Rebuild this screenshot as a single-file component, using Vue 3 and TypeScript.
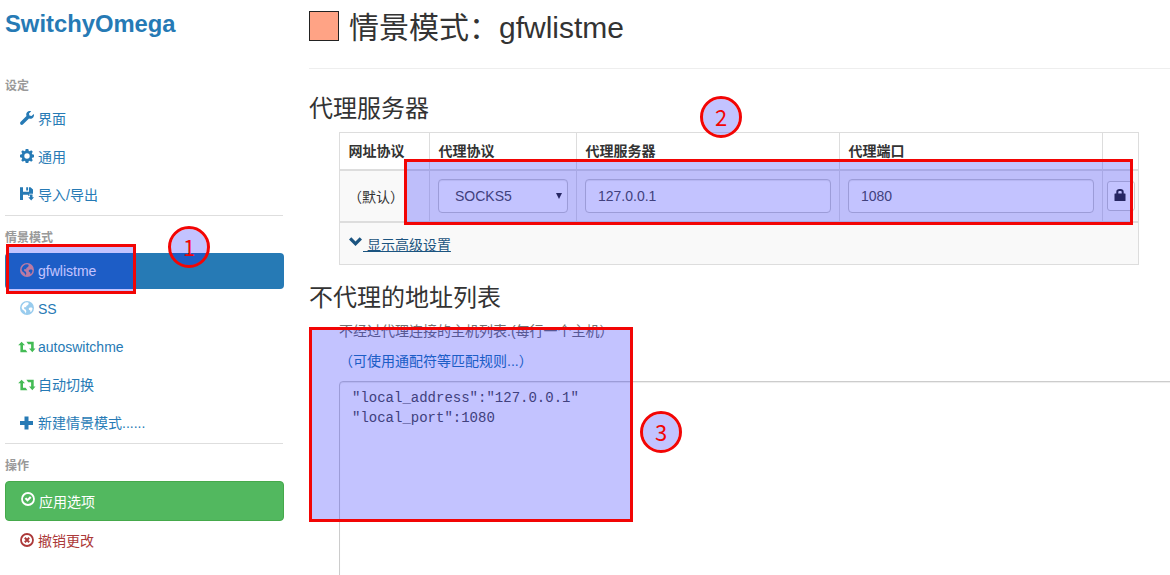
<script setup lang="ts">
import { ref } from 'vue'

type IconName = 'wrench' | 'gear' | 'save' | 'globe' | 'retweet' | 'plus'

interface NavItem {
  label: string
  icon: IconName
  tone?: string
  active?: boolean
}

const settings: NavItem[] = [
  { label: '界面', icon: 'wrench' },
  { label: '通用', icon: 'gear' },
  { label: '导入/导出', icon: 'save' },
]

const profiles: NavItem[] = [
  { label: 'gfwlistme', icon: 'globe', tone: 'salmon', active: true },
  { label: 'SS', icon: 'globe', tone: 'sky' },
  { label: 'autoswitchme', icon: 'retweet', tone: 'green' },
  { label: '自动切换', icon: 'retweet', tone: 'green' },
  { label: '新建情景模式......', icon: 'plus' },
]

const groups = [
  { title: '设定', items: settings },
  { title: '情景模式', items: profiles },
]

const paths: Record<IconName, string> = {
  wrench:
    'M13.8 3.1 11.5 5.1 9.4 4.5 9 2.6 11.2.3C9.5-.2 7.6.2 6.7 1.7 6.1 2.8 6.1 3.9 6.5 5L.7 10.8C0 11.5-.1 12.7.6 13.4 1.3 14.1 2.4 14 3.1 13.3L9 7.5C10.6 8 12.2 7.7 13.2 6.5 14 5.5 14.2 4.2 13.8 3.1Z',
  gear:
    'M5.7 0h2.6l.4 1.8 1 .4L11.2 1.200 12.800 2.800 11.800 4.300l.4 1L14 5.700v2.600l-1.800.4-.4 1L12.800 11.200 11.200 12.800 9.700 11.800l-1 .4L8.300 14H5.700l-.4-1.800-1-.4L2.800 12.800 1.200 11.200 2.200 9.700l-.4-1L0 8.300V5.700l1.800-.4.4-1L1.200 2.800 2.800 1.200 4.300 2.200l1-.4ZM7 4.300a2.700 2.700 0 1 0 0 5.400 2.700 2.700 0 0 0 0-5.400Z',
  save:
    'M0 .3h3v4.400h6V.3h1.500L13 2.500v4.200H9.500v2.200H8.300V7.700H3V13H0ZM6.200.3h1.900v3.200H6.200ZM10 7.500h2.500v2.800H14L11.200 13.500 8.300 10.300H10Z',
  globe:
    'M7 0a7 7 0 1 1 0 14A7 7 0 0 1 7 0ZM7.300 1.300 5.200 1.600 3.200 2.900 1.900 4.900 1.600 7 2.600 8.700 4.200 9.800 5.300 11.500 5.800 12.500 6.300 10.500 5.900 8.800 4.300 7.900 4 6.600 5.200 5.900 6.200 6.400 6.300 5.100 7.600 4.200 8.700 3.100 8.500 1.700ZM9.800 6.600 8.700 7.500 9 9 10.200 9.300 10.400 10.900 11.200 10.700 12.200 9.100 12.500 7.300 11.700 6.500Z',
  retweet:
    'M3.600 1.700 7 5.300H5V9.700H7.600L9.400 12.300H2.400V5.300H.2ZM8.400 1.700H15.700V8.400H17.500L14.300 12.300 11 8.400H13.100V4.300H10.200Z',
  plus: 'M4.500 1.500h4V6H13v4H8.500v4.500h-4V10H0V6h4.500Z',
}

const host = ref('127.0.0.1')
const port = ref('1080')
const bypassList = ref('"local_address":"127.0.0.1"\n"local_port":1080')
</script>

<template>
  <div class="page">
    <aside class="sidebar">
      <h1 class="brand">SwitchyOmega</h1>
      <nav>
        <section v-for="group in groups" :key="group.title" class="group">
          <div class="group-title">{{ group.title }}</div>
          <a v-for="item in group.items" :key="item.label" class="item" :class="{ active: item.active }">
            <svg
              class="icon"
              :class="[item.tone, { wide: item.icon === 'retweet' }]"
              :viewBox="item.icon === 'retweet' ? '0 0 18 14' : '0 0 14 14'"
            >
              <path :d="paths[item.icon]" fill="currentColor" fill-rule="evenodd" />
            </svg>
            <span>{{ item.label }}</span>
          </a>
        </section>
        <section class="group">
          <div class="group-title">操作</div>
          <a class="item apply">
            <svg class="icon" viewBox="0 0 14 14">
              <circle cx="7" cy="7" r="6" fill="none" stroke="currentColor" stroke-width="1.8" />
              <path d="M3.7 6.8 5.2 5.5 6.5 6.7 9 4.3 10.5 5.7 6.5 9.7Z" fill="currentColor" />
            </svg>
            <span>应用选项</span>
          </a>
          <a class="item revert">
            <svg class="icon" viewBox="0 0 14 14">
              <circle cx="7" cy="7" r="6" fill="none" stroke="currentColor" stroke-width="1.8" />
              <path d="M4.8 4.8 9.2 9.2M9.2 4.8 4.8 9.2" stroke="currentColor" stroke-width="2" />
            </svg>
            <span>撤销更改</span>
          </a>
        </section>
      </nav>
    </aside>

    <main class="content">
      <header class="title">
        <span class="swatch"></span>
        <h2>情景模式：gfwlistme</h2>
      </header>

      <h3 class="servers-title">代理服务器</h3>
      <div class="table">
        <div class="row head">
          <div class="cell">网址协议</div>
          <div class="cell">代理协议</div>
          <div class="cell">代理服务器</div>
          <div class="cell">代理端口</div>
          <div class="cell"></div>
        </div>
        <div class="row body">
          <div class="cell scheme">（默认）</div>
          <div class="cell">
            <div class="control select">
              <span>SOCKS5</span>
              <svg class="caret" viewBox="0 0 6 6"><path d="M0 0h6L3 6Z" fill="currentColor" /></svg>
            </div>
          </div>
          <div class="cell"><input v-model="host" class="control" /></div>
          <div class="cell"><input v-model="port" class="control" /></div>
          <div class="cell lock-cell">
            <button class="lock">
              <svg viewBox="0 0 12 12">
                <path
                  d="M2.3 4.5V2.7C2.3.9 3.7 0 5.2 0h1.6c1.5 0 2.9.9 2.9 2.7v1.8H11q.5 0 .5.5v6.5q0 .5-.5.5H1q-.5 0-.5-.5V5q0-.5.5-.5ZM4.3 4.5h3.4V3q0-1-1-1H5.300q-1 0-1 1Z"
                  fill="currentColor"
                  fill-rule="evenodd"
                />
              </svg>
            </button>
          </div>
        </div>
        <div class="foot">
          <svg class="chevron" viewBox="0 0 13 9">
            <path d="M0 2.6 2.3.3 6.5 4.4 10.7.3 13 2.6 6.5 9Z" fill="currentColor" />
          </svg>
          <a class="advanced">&nbsp;显示高级设置</a>
        </div>
      </div>

      <h3 class="bypass-title">不代理的地址列表</h3>
      <div class="bypass">
        <p class="help">不经过代理连接的主机列表:(每行一个主机）</p>
        <p class="help link">（可使用通配符等匹配规则...）</p>
        <textarea v-model="bypassList" class="list" spellcheck="false"></textarea>
      </div>
    </main>

    <div class="mark box-profile"></div>
    <div class="mark box-server"></div>
    <div class="mark box-bypass"></div>
    <div class="mark step step-1">1</div>
    <div class="mark step step-2">2</div>
    <div class="mark step step-3">3</div>
  </div>
</template>

<style>
body {
  overflow: hidden;
  background: #fff;
}
</style>

<style scoped>
* {
  box-sizing: border-box;
}
.page {
  position: relative;
  display: flex;
  gap: 25px;
  width: 1170px;
  height: 575px;
  padding-left: 5px;
  overflow: hidden;
  color: #333;
  font: 14px/20px 'Liberation Sans', 'Noto Sans CJK SC', sans-serif;
  white-space: nowrap;
}
h1,
h2,
h3,
p {
  margin: 0;
  font-weight: 400;
}
.sidebar {
  flex: none;
  width: 279px;
}
.brand {
  height: 69px;
  padding-top: 9px;
  color: #267ab5;
  font-size: 23.8px;
  font-weight: 700;
  line-height: 30px;
}
.group + .group {
  padding-top: 6px;
  background: linear-gradient(#dedede, #dedede) 0 0 / 278px 1px no-repeat;
}
.group-title {
  height: 32px;
  padding-top: 1px;
  color: #999;
  font-size: 12px;
  font-weight: 700;
  line-height: 32px;
}
.item {
  display: flex;
  align-items: center;
  height: 36px;
  margin-bottom: 2px;
  padding: 0 15px;
  border-radius: 4px;
  color: #267ab5;
}
.icon {
  flex: none;
  width: 14px;
  height: 14px;
  margin: -2px 4px 0 0;
  overflow: visible;
}
.icon.wide {
  width: 18px;
  margin: 0 2px 0 -2px;
}
.salmon {
  color: #ffa385;
}
.sky {
  color: #99ccee;
}
.green {
  color: #44bb55;
}
.item.active {
  background: #267ab5;
  color: #fff;
}
.item.active .salmon {
  color: #f6a087;
}
.item.apply {
  height: 40px;
  padding-top: 1px;
  border: 1px solid #45a94b;
  background: #52b85f;
  color: #fff;
}
.item.apply span {
  padding-top: 1px;
}
.item.apply .icon {
  margin-top: -6px;
}
.item.revert {
  color: #ac3939;
}
.content {
  flex: none;
  width: 900px;
}
.title {
  display: flex;
  align-items: flex-start;
  gap: 10px;
  height: 69px;
  padding-top: 11px;
  border-bottom: 1px solid #eee;
}
.swatch {
  width: 30px;
  height: 30px;
  border: 1px solid #222;
  background: #ffa385;
}
.title h2 {
  font-size: 30px;
  line-height: 33px;
}
h3 {
  font-size: 24px;
  line-height: 26px;
}
.servers-title {
  padding-top: 27px;
  height: 63px;
}
.table {
  width: 800px;
  height: 133px;
  margin-left: 30px;
  border: 1px solid #ddd;
}
.row {
  display: grid;
  grid-template-columns: 90px 147px 263px 263px 35px;
  border-bottom: 2px solid #ddd;
}
.head {
  height: 38px;
  font-weight: 700;
  line-height: 36px;
}
.body {
  height: 52px;
  background: #f9f9f9;
}
.cell {
  padding: 0 8px;
  border-right: 1px solid #ddd;
}
.head .cell {
  padding-left: 8.5px;
}
.cell:last-child {
  border-right: 0;
}
.body .cell {
  padding-top: 8px;
}
.body .scheme {
  line-height: 36px;
}
.control {
  display: block;
  width: 100%;
  height: 34px;
  padding: 6px 12px;
  border: 1px solid #ccc;
  border-radius: 4px;
  outline: 0;
  background: #fff;
  box-shadow: inset 0 1px 1px rgba(0, 0, 0, 0.075);
  color: #555;
  font: inherit;
}
.select {
  display: flex;
  align-items: center;
  justify-content: space-between;
  width: 130px;
  padding: 0 5px 0 16px;
}
.caret {
  width: 6px;
  height: 6px;
  margin-top: -1px;
  color: #333;
}
.body .lock-cell {
  padding: 10px 0 0 4px;
}
.lock {
  display: flex;
  align-items: center;
  justify-content: center;
  width: 28px;
  height: 30px;
  padding: 0 2px 2px 0;
  border: 1px solid #ccc;
  border-radius: 3px;
  background: #fff;
  color: #333;
}
.lock svg {
  width: 12px;
  height: 12px;
}
.foot {
  display: flex;
  align-items: flex-start;
  height: 41px;
  padding: 12px 0 0 9px;
  background: #f9f9f9;
  color: #1b5480;
}
.chevron {
  width: 13px;
  height: 9px;
  margin: 1.5px 1px 0 0;
}
.advanced {
  text-decoration: underline;
}
.bypass-title {
  height: 56px;
  padding-top: 20px;
}
.bypass {
  padding-left: 30px;
}
.help {
  height: 30px;
  color: #737373;
}
.link {
  color: #267ab5;
}
.list {
  display: block;
  width: 870px;
  height: 260px;
  padding: 6px 12px;
  border: 1px solid #ccc;
  border-radius: 4px;
  outline: 0;
  box-shadow: inset 0 1px 1px rgba(0, 0, 0, 0.075);
  color: #555;
  font: 14px/20px 'Liberation Mono', monospace;
  resize: none;
}
.mark {
  position: absolute;
  border: 3px solid #f20505;
  background: rgba(0, 0, 255, 0.235);
  background-clip: padding-box;
}
.box-profile {
  left: 6px;
  top: 244px;
  width: 130px;
  height: 50px;
}
.box-server {
  left: 404px;
  top: 159px;
  width: 729px;
  height: 66px;
}
.box-bypass {
  left: 309px;
  top: 327px;
  width: 324px;
  height: 195px;
}
.step {
  width: 42.4px;
  height: 42.4px;
  border-radius: 50%;
  color: #f20505;
  font: 22px/35px 'Noto Sans CJK SC', sans-serif;
  text-align: center;
}
.step-1 {
  left: 168px;
  top: 226px;
}
.step-2 {
  left: 700px;
  top: 96px;
}
.step-3 {
  left: 640px;
  top: 411px;
}
</style>
